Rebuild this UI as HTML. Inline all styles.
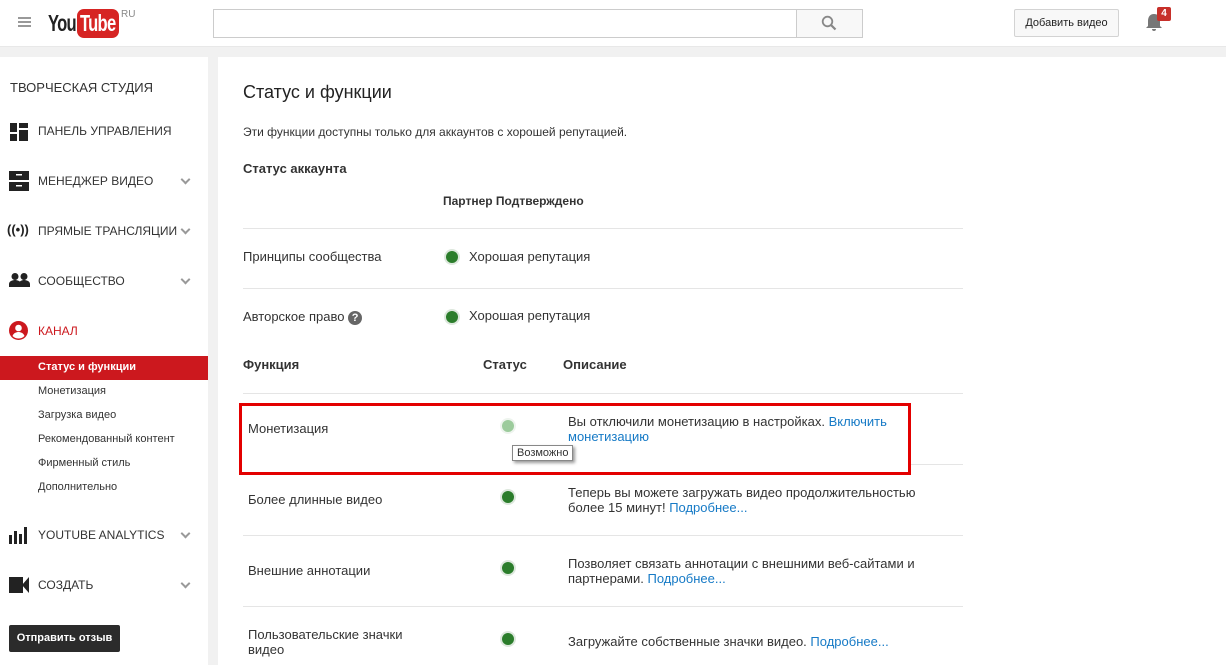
<!DOCTYPE html>
<html><head><meta charset="utf-8"><style>
*{margin:0;padding:0;box-sizing:border-box}
body{width:1226px;height:665px;overflow:hidden;background:#f1f1f1;font-family:"Liberation Sans",Arial,sans-serif;color:#333;position:relative}
.a{position:absolute}
#hdr{left:0;top:0;width:1226px;height:47px;background:#fff;border-bottom:1px solid #e8e8e8}
#side{left:0;top:57px;width:208px;height:608px;background:#fff}
#main{left:218px;top:57px;width:1008px;height:608px;background:#fff}
.nav{font-size:12px;color:#333;left:38px}
.sub{font-size:11px;color:#333;left:38px}
.chev{left:182px;width:7px;height:7px;border-right:2px solid #999;border-bottom:2px solid #999;transform:rotate(45deg)}
.ln{left:243px;width:720px;height:1px;background:#e5e5e5}
.t{font-size:13px;color:#333}
.dot{width:12px;height:12px;border-radius:50%;background:#2b7d2b;box-shadow:0 0 0 2px #dde8dd}
a{color:#167ac6;text-decoration:none}
</style></head><body>
<div id="hdr" class="a">
 <div class="a" style="left:18px;top:17px;width:13px;height:2px;background:#999;box-shadow:0 4px 0 #999,0 8px 0 #999"></div>
 <div class="a" style="left:48px;top:9px;font-size:23px;font-weight:bold;letter-spacing:-1px;color:#222;transform:scaleX(.72);transform-origin:left;line-height:29px">You</div>
 <div class="a" style="left:77px;top:9px;width:42px;height:29px;background:#d62423;border-radius:7px;overflow:hidden"><div style="color:#fff;font-size:23px;font-weight:bold;letter-spacing:-1px;line-height:29px;transform:scaleX(.72);transform-origin:left;margin-left:3px;white-space:nowrap">Tube</div></div>
 <div class="a" style="left:121px;top:9px;font-size:10px;color:#888">RU</div>
 <div class="a" style="left:213px;top:9px;width:584px;height:29px;border:1px solid #ccc;background:#fff"></div>
 <div class="a" style="left:796px;top:9px;width:67px;height:29px;border:1px solid #ccc;background:#f8f8f8"></div>
 <svg class="a" style="left:821px;top:15px" width="16" height="16"><circle cx="6.5" cy="6.5" r="4.8" fill="none" stroke="#888" stroke-width="1.8"/><path d="M10 10l4.5 4.5" stroke="#888" stroke-width="2.2"/></svg>
 <div class="a" style="left:1014px;top:9px;width:105px;height:28px;border:1px solid #d3d3d3;background:#f8f8f8;border-radius:2px;font-size:11px;color:#222;text-align:center;line-height:26px">Добавить видео</div>
 <svg class="a" style="left:1143px;top:11px" width="22" height="22"><path d="M11 3c-4 0-6 3-6 7v5l-2 2h16l-2-2v-5c0-4-2-7-6-7zM9 18a2 2 0 004 0z" fill="#777"/></svg>
 <div class="a" style="left:1157px;top:7px;width:14px;height:14px;background:#c7302a;color:#fff;font-size:10px;font-weight:bold;text-align:center;line-height:14px;border-radius:2px">4</div>
</div>
<div id="side" class="a">
 <div class="a" style="left:10px;top:23px;font-size:13px;color:#333">ТВОРЧЕСКАЯ СТУДИЯ</div>
 <svg class="a" style="left:10px;top:66px" width="18" height="18"><rect x="0" y="0" width="7" height="9" fill="#222"/><rect x="9" y="0" width="9" height="5" fill="#222"/><rect x="0" y="11" width="7" height="7" fill="#222"/><rect x="9" y="7" width="9" height="11" fill="#222"/></svg>
 <div class="a nav" style="top:67px">ПАНЕЛЬ УПРАВЛЕНИЯ</div>
 <svg class="a" style="left:9px;top:114px" width="20" height="20"><rect x="0" y="0" width="20" height="9" fill="#222"/><rect x="0" y="11" width="20" height="9" fill="#222"/><rect x="7" y="3" width="6" height="1.5" fill="#fff"/><rect x="7" y="14" width="6" height="1.5" fill="#fff"/></svg>
 <div class="a nav" style="top:117px">МЕНЕДЖЕР ВИДЕО</div><div class="a chev" style="top:119px"></div>
 <div class="a" style="left:7px;top:165px;font-size:13px;font-weight:bold;color:#222">((•))</div>
 <div class="a nav" style="top:167px">ПРЯМЫЕ ТРАНСЛЯЦИИ</div><div class="a chev" style="top:169px"></div>
 <svg class="a" style="left:9px;top:216px" width="21" height="14"><circle cx="6" cy="3.5" r="3.5" fill="#222"/><circle cx="15" cy="3.5" r="3.5" fill="#222"/><path d="M0 14v-3c0-3 4-4 6-4s6 1 6 4v3zM10 14v-3c0-3 3-4 5-4s6 1 6 4v3z" fill="#222"/></svg>
 <div class="a nav" style="top:217px">СООБЩЕСТВО</div><div class="a chev" style="top:219px"></div>
 <svg class="a" style="left:9px;top:264px" width="19" height="19"><circle cx="9.5" cy="9.5" r="9.5" fill="#cc181e"/><circle cx="9.5" cy="7" r="3.3" fill="#fff"/><path d="M3.5 15c1-3 4-4 6-4s5 1 6 4c-2 2-4 2.5-6 2.5s-4-.5-6-2.5z" fill="#fff"/></svg>
 <div class="a nav" style="top:267px;color:#cc181e">КАНАЛ</div>
 <div class="a" style="left:0;top:299px;width:208px;height:24px;background:#cc181e"></div>
 <div class="a sub" style="top:304px;color:#fff;font-weight:bold">Статус и функции</div>
 <div class="a sub" style="top:328px">Монетизация</div>
 <div class="a sub" style="top:352px">Загрузка видео</div>
 <div class="a sub" style="top:376px">Рекомендованный контент</div>
 <div class="a sub" style="top:400px">Фирменный стиль</div>
 <div class="a sub" style="top:424px">Дополнительно</div>
 <svg class="a" style="left:9px;top:470px" width="19" height="17"><rect x="0" y="8" width="3" height="9" fill="#222"/><rect x="5" y="4" width="3" height="13" fill="#222"/><rect x="10" y="7" width="3" height="10" fill="#222"/><rect x="15" y="0" width="3" height="17" fill="#222"/></svg>
 <div class="a nav" style="top:471px">YOUTUBE ANALYTICS</div><div class="a chev" style="top:473px"></div>
 <svg class="a" style="left:9px;top:520px" width="20" height="16"><rect x="0" y="0" width="14" height="16" fill="#222"/><path d="M20 0v16l-7-8z" fill="#222"/></svg>
 <div class="a nav" style="top:521px">СОЗДАТЬ</div><div class="a chev" style="top:523px"></div>
 <div class="a" style="left:9px;top:568px;width:111px;height:27px;background:#2b2b2b;border-radius:2px;color:#fff;font-size:11px;font-weight:bold;text-align:center;line-height:27px">Отправить отзыв</div>
</div>
<div id="main" class="a"></div>
<div class="a" style="left:243px;top:82px;font-size:18px;color:#222">Статус и функции</div>
<div class="a" style="left:243px;top:125px;font-size:12px;color:#333">Эти функции доступны только для аккаунтов с хорошей репутацией.</div>
<div class="a t" style="left:243px;top:161px;font-weight:bold">Статус аккаунта</div>
<div class="a" style="left:443px;top:194px;font-size:12px;font-weight:bold;color:#333">Партнер Подтверждено</div>
<div class="a ln" style="top:228px"></div>
<div class="a t" style="left:243px;top:249px">Принципы сообщества</div>
<div class="a dot" style="left:446px;top:251px"></div>
<div class="a t" style="left:469px;top:249px">Хорошая репутация</div>
<div class="a ln" style="top:288px"></div>
<div class="a t" style="left:243px;top:309px">Авторское право <span style="display:inline-block;width:14px;height:14px;border-radius:50%;background:#666;color:#fff;font-size:11px;font-weight:bold;text-align:center;line-height:14px;vertical-align:0">?</span></div>
<div class="a dot" style="left:446px;top:311px"></div>
<div class="a t" style="left:469px;top:308px">Хорошая репутация</div>
<div class="a t" style="left:243px;top:357px;font-weight:bold">Функция</div>
<div class="a t" style="left:483px;top:357px;font-weight:bold">Статус</div>
<div class="a t" style="left:563px;top:357px;font-weight:bold">Описание</div>
<div class="a ln" style="top:393px"></div>
<div class="a t" style="left:248px;top:421px">Монетизация</div>
<div class="a dot" style="left:502px;top:420px;background:#9ccb9c;box-shadow:0 0 0 2px #eef4ee"></div>
<div class="a t" style="left:568px;top:414px;width:345px;line-height:15px">Вы отключили монетизацию в настройках. <a>Включить монетизацию</a></div>
<div class="a" style="left:512px;top:445px;padding:1px 4px;border:1px solid #888;background:#fff;font-size:11px;color:#333;box-shadow:2px 2px 3px rgba(0,0,0,.4)">Возможно</div>
<div class="a" style="left:239px;top:403px;width:672px;height:72px;border:3px solid #e30000"></div>
<div class="a ln" style="top:464px;left:911px;width:52px"></div>
<div class="a t" style="left:248px;top:492px">Более длинные видео</div>
<div class="a dot" style="left:502px;top:491px"></div>
<div class="a t" style="left:568px;top:485px;width:380px;line-height:15px">Теперь вы можете загружать видео продолжительностью более 15 минут! <a>Подробнее...</a></div>
<div class="a ln" style="top:535px"></div>
<div class="a t" style="left:248px;top:563px">Внешние аннотации</div>
<div class="a dot" style="left:502px;top:562px"></div>
<div class="a t" style="left:568px;top:556px;width:380px;line-height:15px">Позволяет связать аннотации с внешними веб-сайтами и партнерами. <a>Подробнее...</a></div>
<div class="a ln" style="top:606px"></div>
<div class="a t" style="left:248px;top:627px;line-height:15px">Пользовательские значки<br>видео</div>
<div class="a dot" style="left:502px;top:633px"></div>
<div class="a t" style="left:568px;top:634px">Загружайте собственные значки видео. <a>Подробнее...</a></div>
</body></html>
